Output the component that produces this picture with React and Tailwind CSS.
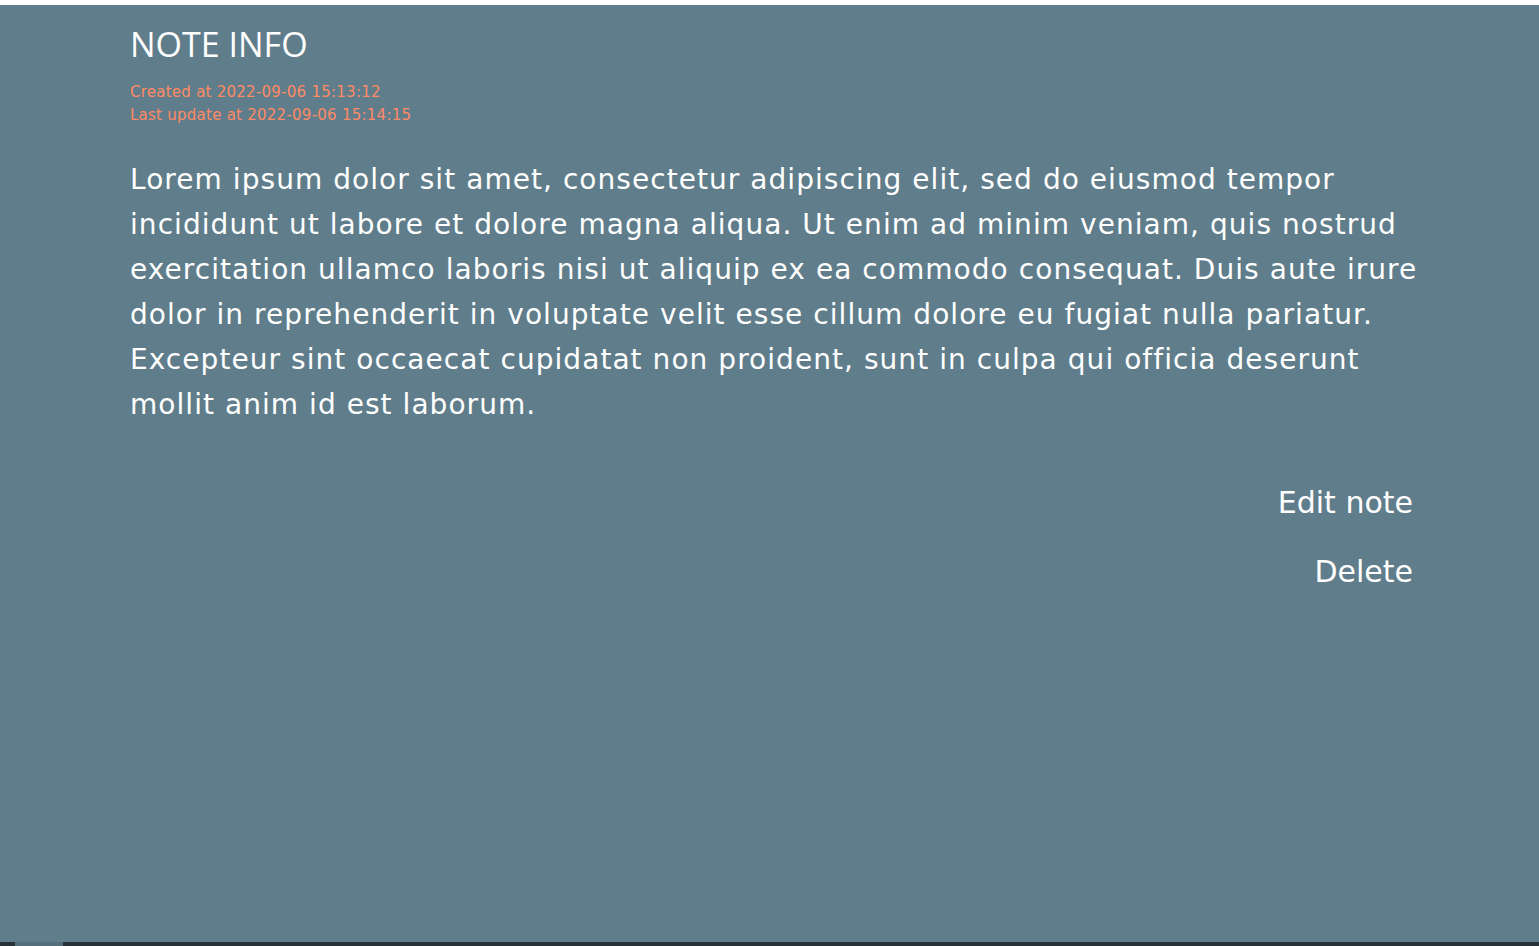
export default function App() {
  return (
    <div className="min-h-screen flex flex-col bg-white">
      <div className="h-[5px] bg-white" />
      <div className="flex-1 bg-[#607d8b] flex flex-col">
        <div className="flex-1 pl-[130px] pr-[120px]" style={{ fontFamily: '"DejaVu Sans", Verdana, sans-serif' }}>
          <h1 className="pt-[19px] text-[34px] leading-[40px] font-normal text-white" style={{ fontFamily: '"Open Sans", "Noto Sans", sans-serif' }}>
            NOTE INFO
          </h1>
          <div className="mt-[17px] text-[#ff8a65] text-[15px] leading-[23px] tracking-[0.25px]">
            <p>Created at 2022-09-06 15:13:12</p>
            <p>Last update at 2022-09-06 15:14:15</p>
          </div>
          <p className="mt-[30px] text-white text-[28px] leading-[45px] tracking-[1.05px] max-w-[1300px]">
            Lorem ipsum dolor sit amet, consectetur adipiscing elit, sed do eiusmod tempor incididunt ut labore et dolore magna aliqua. Ut enim ad minim veniam, quis nostrud exercitation ullamco laboris nisi ut aliquip ex ea commodo consequat. Duis aute irure dolor in reprehenderit in voluptate velit esse cillum dolore eu fugiat nulla pariatur. Excepteur sint occaecat cupidatat non proident, sunt in culpa qui officia deserunt mollit anim id est laborum.
          </p>
          <div className="mt-[58px] flex flex-col items-end gap-[33px] pr-[6px] text-white text-[30px] leading-[36px]">
            <button className="cursor-pointer">Edit note</button>
            <button className="cursor-pointer">Delete</button>
          </div>
        </div>
        <div className="h-[4px] bg-[#263238] flex">
          <div className="ml-[15px] w-[48px] bg-[#546e7a]" />
        </div>
      </div>
    </div>
  )
}
